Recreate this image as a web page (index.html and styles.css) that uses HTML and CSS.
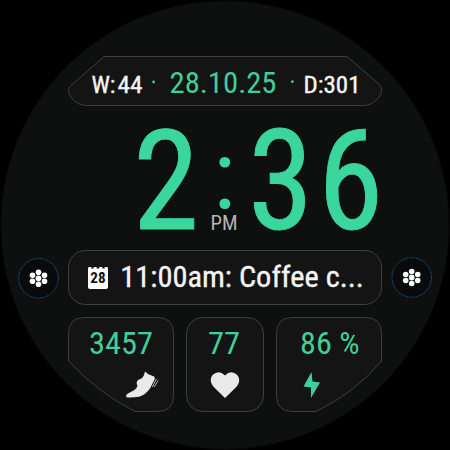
FILE: index.html
```html
<!DOCTYPE html>
<html lang="en">
<head>
<meta charset="utf-8">
<title>Watch face</title>
<link rel="stylesheet" href="styles.css">
</head>
<body>
<svg class="defs" width="0" height="0">
  <defs>
    <g id="cluster" fill="#fff">
      <circle cx="0" cy="0" r="2.9"/><circle cx="0" cy="-6" r="2.800"/><circle cx="0" cy="6" r="2.800"/>
      <circle cx="-6" cy="-3" r="2.800"/><circle cx="-6" cy="3" r="2.800"/><circle cx="6" cy="-3" r="2.800"/><circle cx="6" cy="3" r="2.800"/>
    </g>
  </defs>
</svg>
<main class="watch">
  <svg class="date" width="314" height="50" viewBox="68 56 314 50">
    <path class="panel" d="M104 56.5H347L379.500 84.500Q384.500 91 378 98.500Q372 105.500 363 105.500H87Q78 105.500 72 98.500Q66 91 70.500 86Z"/>
    <text class="white s23" x="91.500" y="92.700" textLength="24" lengthAdjust="spacingAndGlyphs">W:</text>
    <text class="white s23" x="117.500" y="92.700" textLength="25" lengthAdjust="spacingAndGlyphs">44</text>
    <circle class="green" cx="153.600" cy="82" r="1.400"/>
    <text class="green s30" x="169.500" y="92.800" textLength="107" lengthAdjust="spacingAndGlyphs">28.10.25</text>
    <circle class="green" cx="292.400" cy="81.700" r="1.400"/>
    <text class="white s23" x="303.500" y="92.700" textLength="57" lengthAdjust="spacingAndGlyphs">D:301</text>
  </svg>
  <svg class="time" width="314" height="144" viewBox="68 106 314 144">
    <text class="clock" x="133" y="229" textLength="66" lengthAdjust="spacingAndGlyphs">2</text>
    <text class="colon" x="213" y="207.500">:</text>
    <text class="clock pair" x="248" y="229" textLength="140" lengthAdjust="spacingAndGlyphs">36</text>
    <text class="meridiem" x="210.500" y="230" textLength="27" lengthAdjust="spacingAndGlyphs">PM</text>
  </svg>
  <div class="event-row">
    <svg width="42" height="56" viewBox="17 250 42 56">
      <circle class="ring" cx="38.500" cy="278.300" r="19.700"/>
      <use href="#cluster" x="38.500" y="278.300"/>
    </svg>
    <svg width="314" height="56" viewBox="68 250 314 56">
      <rect class="panel" x="68.500" y="250.500" width="313" height="54" rx="17"/>
      <path fill="#fff" d="M89 267H91.300V268.500H93.700V267H96.700V268.500H99.300V267H102.300V268.500H104.700V267H107Q108 267 108 268.500V287.200Q108 289 106.200 289H89.800Q88 289 88 287.200V268.500Q88 267 89 267Z"/>
      <text class="day" x="90.300" y="283.200" textLength="15.300" lengthAdjust="spacingAndGlyphs">28</text>
      <text class="white s30" x="120.300" y="286.500" textLength="243.500" lengthAdjust="spacingAndGlyphs">11:00am: Coffee c...</text>
    </svg>
    <svg width="42" height="56" viewBox="391 250 42 56">
      <circle class="ring" cx="411.700" cy="277.500" r="19.700"/>
      <use href="#cluster" x="411.700" y="277.500"/>
    </svg>
  </div>
  <div class="stats">
    <svg width="106" height="96" viewBox="68 317 106 96">
      <path class="panel" d="M84.500 317.500H157.500Q173.500 317.500 173.500 333.500V395.500Q173.500 411.500 157.500 411.500H135Q97 392 68.500 361V333.500Q68.500 317.500 84.500 317.500Z"/>
      <text class="green s31" x="89" y="353.600" textLength="64" lengthAdjust="spacingAndGlyphs">3457</text>
      <path fill="#e7e9ea" d="M145 371.500L148 374L154 376.500Q155.500 377.500 154.500 379.500L150 388.500Q145.500 395 139 396.800Q131 398 126.500 397.300Q125.300 395 128 393.500L134 390.300Q139 386.500 136.700 384Q136.300 380.500 139 379.500Q143.500 379 145 371.500Z"/>
      <path stroke="#b9baba" stroke-width="1" fill="none" d="M156.300 379L152.300 387M158 380.500L154.300 387"/>
    </svg>
    <svg width="78" height="96" viewBox="186 317 78 96">
      <rect class="panel" x="186.500" y="317.500" width="77" height="94" rx="16"/>
      <text class="green s31" x="208" y="353.600" textLength="32" lengthAdjust="spacingAndGlyphs">77</text>
      <path fill="#e7e9ea" d="M225 398L213.500 386.700Q208.500 380.500 212.500 375Q219 369.500 225 375.500Q231 369.500 237.300 375Q241.500 380.500 236.500 386.700Z"/>
    </svg>
    <svg width="106" height="96" viewBox="276 317 106 96">
      <path class="panel" d="M292.500 317.500H365.500Q381.500 317.500 381.500 333.500V361Q356 392 316 411.500H292.500Q276.500 411.500 276.500 395.500V333.500Q276.500 317.500 292.500 317.500Z"/>
      <text class="green s31" x="300" y="353.600" textLength="59.500" lengthAdjust="spacingAndGlyphs">86 %</text>
      <path class="green" d="M311.500 372L303.500 386.500L311 387.500V398L320 382.500L312.500 381.500Z"/>
    </svg>
  </div>
</main>
</body>
</html>
```

FILE: styles.css
```css
body {
  margin: 0;
  background: #000;
  font-family: "Roboto Condensed", Roboto, "Liberation Sans", sans-serif;
}

.defs {
  display: none;
}

svg {
  display: block;
  overflow: visible;
}

.watch {
  box-sizing: border-box;
  width: 450px;
  height: 450px;
  padding-top: 56px;
  display: flex;
  flex-direction: column;
  align-items: center;
  background: radial-gradient(circle at center, #0e0f0f 223px, #000 225px);
}

.event-row {
  display: flex;
  gap: 9px;
}

.stats {
  display: flex;
  gap: 12px;
  margin-top: 11px;
}

.panel {
  fill: #131413;
  stroke: #3e4040;
  stroke-width: 1;
}

.ring {
  fill: #080a0b;
  stroke: #1f69a8;
  stroke-width: 1;
  stroke-dasharray: 1.2 1.1;
}

.green {
  fill: #40cf9a;
}

.white {
  fill: #f5f5f5;
  stroke: #f5f5f5;
  stroke-width: 0.35px;
}

.s23 {
  font-size: 23.5px;
}

.s30 {
  font-size: 30px;
}

.s31 {
  font-size: 31px;
}

.clock,
.colon {
  fill: #3ad69d;
  font-size: 140px;
}

.clock {
  stroke: #3ad69d;
  stroke-width: 1px;
}

.pair {
  letter-spacing: 5px;
}

.colon {
  font-size: 96px;
}

.meridiem {
  fill: #b5b5b5;
  font-size: 19.5px;
}

.day {
  fill: #111;
  font-size: 14px;
  font-weight: 700;
}
```
